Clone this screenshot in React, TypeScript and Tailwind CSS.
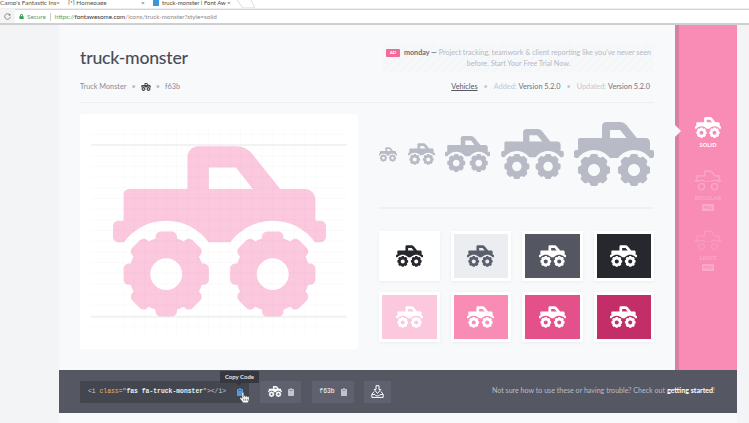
import { FaTruckMonster, FaClipboard, FaHandPointer, FaLock } from "react-icons/fa";

const swatches = [
  { bg: "bg-white", fg: "text-[#27282e]" },
  { bg: "bg-[#ecedf1]", fg: "text-[#5b5e6b]" },
  { bg: "bg-[#545762]", fg: "text-white" },
  { bg: "bg-[#27282e]", fg: "text-white" },
  { bg: "bg-[#fbc8de]", fg: "text-white" },
  { bg: "bg-[#f88cb5]", fg: "text-white" },
  { bg: "bg-[#e3508a]", fg: "text-white" },
  { bg: "bg-[#c42e68]", fg: "text-white" },
];

function GridLines() {
  const rows = Array.from({ length: 19 }, (_, i) => 20.33 + i * 10.67);
  const cols = Array.from({ length: 19 }, (_, i) => 43.33 + i * 10.67);
  return (
    <svg className="absolute inset-0" width="278" height="235" viewBox="0 0 278 235">
      {rows.map((y) => (
        <line key={y} x1="11" x2="267" y1={y} y2={y} stroke="#9aa0b0" strokeOpacity="0.05" />
      ))}
      {cols.map((x) => (
        <line key={x} x1={x} x2={x} y1="11" y2="224" stroke="#9aa0b0" strokeOpacity="0.04" />
      ))}
      <line x1="11" x2="267" y1="31" y2="31" stroke="#e6e7ea" />
      <line x1="11" x2="267" y1="203" y2="203" stroke="#e6e7ea" />
    </svg>
  );
}

// outline version of the truck, the icon packages only have the solid one
function OutlineTruck({ weight, className }: { weight: number; className: string }) {
  return (
    <svg className={className} width="26" height="21" viewBox="0 0 640 512" fill="none" stroke="#fba9c8" strokeWidth={weight}>
      <path d="M16 272 H48 V144 H240 V24 H370 Q400 24 420 50 L490 144 H592 V272 H624" />
      <path d="M48 272 H16 V240 M592 272 H624 V240" />
      <path d="M290 280 H340" />
      <circle cx="160" cy="408" r="76" />
      <circle cx="480" cy="408" r="76" />
      <path d="M60 280 Q160 230 260 280 M380 280 Q480 230 580 280" />
    </svg>
  );
}

function BrowserBar() {
  return (
    <div className="shrink-0 bg-white">
      <div className="flex h-[9px] items-start overflow-hidden border-b border-[#eeeeee] text-[6.4px] leading-[5px] text-[#555555]">
        <span className="w-[56px] overflow-hidden whitespace-nowrap pr-[5px]">Camp's Fantastic Ins</span>
        <span className="w-[12px]">×</span>
        <span className="w-[73px] overflow-hidden whitespace-nowrap">[*] Homepage</span>
        <span className="w-[12px]">×</span>
        <span className="mr-[3px] h-[6px] w-[6px] bg-[#3a96dd]" />
        <span className="w-[65px] overflow-hidden whitespace-nowrap text-[6px] text-[#444444]">truck-monster | Font Aw</span>
        <span>×</span>
        <svg className="ml-[6px]" width="18" height="9" viewBox="0 0 18 9">
          <path d="M0 0 L6 8 H18 L14 0" fill="none" stroke="#cccccc" strokeWidth="0.7" />
        </svg>
      </div>
      <div className="flex h-[16px] items-center border-b-2 border-[#cfcfcf] bg-[#f4f4f4]">
        <svg className="ml-[4px] mr-[4px]" width="7" height="7" viewBox="0 0 10 10">
          <path d="M8.5 3 A4 4 0 1 0 9 5.5" fill="none" stroke="#666666" strokeWidth="1" />
          <path d="M9 0.8 V3.6 H6.2" fill="#666666" />
        </svg>
        <div className="flex h-full flex-1 items-center border-t border-[#d4d4d4] bg-white pl-[4px] text-[6.3px] text-[#8a8a8a]">
          <FaLock className="mr-[3px] h-[5px] w-[5px] text-[#2f9e4f]" />
          <span className="text-[#5c9e70]">Secure</span>
          <span className="mx-[4px] h-[8px] w-px bg-[#cccccc]" />
          <span className="whitespace-nowrap">
            <span className="text-[#5c9e70]">https://</span>
            <span className="text-[#333333]">fontawesome.com</span>
            /icons/truck-monster?style=solid
          </span>
        </div>
      </div>
    </div>
  );
}

function Header() {
  return (
    <>
      <div className="flex items-center justify-between pt-[19px]">
        <h1 className="text-[17.7px] font-medium leading-[28px] tracking-[-0.25px] text-[#4a4c57]">truck-monster</h1>
        <div className="h-[28px] w-[271px] bg-[repeating-linear-gradient(135deg,#f5f6f8_0,#f5f6f8_3px,#f7f8fa_3px,#f7f8fa_6px)] pt-[4px] text-center text-[7.2px] leading-[10.5px] text-[#b5b8c3]">
          <span className="mr-[4px] inline-block h-[8px] w-[14px] rounded-[1px] bg-[#f06a9b] text-center align-middle text-[4.5px] font-bold leading-[8px] text-white">AD</span>
          <span className="font-bold text-[#6a6d79]">monday —</span> Project tracking, teamwork &amp; client reporting like you've never seen before. Start Your Free Trial Now.
        </div>
      </div>
      <div className="mt-[9px] flex h-[12px] items-center justify-between pr-[4px] text-[7.3px] text-[#8a8c97]">
        <div className="flex items-center">
          <span>Truck Monster</span>
          <span className="mx-[5px] text-[#b5b8c2]">•</span>
          <FaTruckMonster className="h-[10px] w-[10px] text-[#44464f]" />
          <span className="mx-[5px] text-[#b5b8c2]">•</span>
          <span>f63b</span>
        </div>
        <div className="flex items-center">
          <span className="text-[#555863] underline">Vehicles</span>
          <span className="mx-[6px] text-[#c5c7cf]">•</span>
          <span className="text-[#c5c7cf]">Added:&nbsp;</span>
          <span className="text-[#6f727e]">Version 5.2.0</span>
          <span className="mx-[6px] text-[#c5c7cf]">•</span>
          <span className="text-[#c5c7cf]">Updated:&nbsp;</span>
          <span className="text-[#6f727e]">Version 5.2.0</span>
        </div>
      </div>
      <div className="mt-[9px] h-px bg-[#eceef1]" />
    </>
  );
}

function Showcase() {
  return (
    <div className="mt-[11px] flex gap-[21px]">
      <div className="relative flex h-[235px] w-[278px] shrink-0 items-center justify-center rounded-[2px] bg-white">
        <FaTruckMonster className="h-[171px] w-[213px] text-[#fbc8de]" />
        <GridLines />
      </div>
      <div className="flex-1">
        <div className="mt-[8px] flex h-[64px] items-center justify-between text-[#b8bac5]">
          <FaTruckMonster className="h-[15px] w-[18px]" />
          <FaTruckMonster className="h-[22px] w-[27px]" />
          <FaTruckMonster className="h-[36px] w-[45px]" />
          <FaTruckMonster className="h-[50px] w-[63px]" />
          <FaTruckMonster className="h-[64px] w-[80px]" />
        </div>
        <div className="mt-[21px] h-[2px] bg-[#f0f1f4]" />
        <div className="mt-[22px] grid grid-cols-4 gap-x-[11px] gap-y-[11px]">
          {swatches.map((s) => (
            <div key={s.bg} className="h-[50px] bg-white p-[3px] shadow-[0_1px_3px_rgba(80,84,100,0.08)]">
              <div className={`flex h-full items-center justify-center ${s.bg} ${s.fg}`}>
                <FaTruckMonster className="h-[22px] w-[27px]" />
              </div>
            </div>
          ))}
        </div>
      </div>
    </div>
  );
}

function StyleRail() {
  return (
    <div className="relative flex w-[62px] shrink-0 flex-col items-center border-l-4 border-[#d97fa5] bg-[#f88cb5] pt-[92px] text-[5.5px] font-bold tracking-[0.2px]">
      <div className="absolute left-[-4px] top-[100px] h-0 w-0 border-y-[6px] border-l-[6px] border-y-transparent border-l-[#f8f9fb]" />
      <FaTruckMonster className="h-[21px] w-[26px] text-white" />
      <span className="mt-[3px] leading-[8px] text-white">SOLID</span>
      <OutlineTruck className="mt-[21px]" weight={30} />
      <span className="mt-[3px] leading-[8px] text-[#fba9c8]">REGULAR</span>
      <span className="mt-[2px] h-[7px] w-[12px] bg-[#fba9c8] text-center text-[4px] leading-[7px] text-[#f88cb5]">PRO</span>
      <OutlineTruck className="mt-[19px]" weight={18} />
      <span className="mt-[3px] leading-[8px] text-[#fba9c8]">LIGHT</span>
      <span className="mt-[2px] h-[7px] w-[12px] bg-[#fba9c8] text-center text-[4px] leading-[7px] text-[#f88cb5]">PRO</span>
    </div>
  );
}

function CodeBar() {
  return (
    <div className="flex h-[43px] shrink-0 items-center bg-[#555863] pl-[21px] pr-[22px]">
      <div className="relative flex h-[22px] w-[169px] items-center justify-between rounded-[1px] bg-[#44464f] pl-[8px] pr-[6px] text-[6.4px] [font-family:'Liberation_Mono',monospace]">
        <span className="whitespace-nowrap text-[#c9cbd3]">
          &lt;i <span className="text-[#e5b567]">class</span>="<span className="font-bold text-[#eeeeee]">fas fa-truck-monster</span>"&gt;&lt;/i&gt;
        </span>
        <FaClipboard className="h-[8px] w-[6px] text-[#4a9ce8]" />
        <div className="absolute left-[140px] top-[-10px] flex h-[12px] w-[39px] items-center justify-center rounded-[1px] bg-[#36373f] text-[6px] font-bold text-[#e8e8ea] [font-family:Lato,sans-serif]">
          Copy Code
        </div>
        <div className="absolute left-[156px] top-[2px] h-0 w-0 border-x-[3px] border-t-[3px] border-x-transparent border-t-[#36373f]" />
        <FaHandPointer className="absolute left-[160px] top-[11px] h-[11px] w-[9px] stroke-[#333333] stroke-[14] text-white" />
      </div>
      <div className="ml-[11px] flex h-[22px] w-[41px] items-center justify-center gap-[6px] rounded-[1px] bg-[#5f626e] text-white">
        <FaTruckMonster className="h-[11px] w-[14px]" />
        <FaClipboard className="h-[8px] w-[6px] text-[#c3c5cd]" />
      </div>
      <div className="ml-[11px] flex h-[22px] w-[42px] items-center justify-center gap-[6px] rounded-[1px] bg-[#5f626e] text-[6.4px] text-white [font-family:'Liberation_Mono',monospace]">
        <span>f63b</span>
        <FaClipboard className="h-[8px] w-[6px] text-[#c3c5cd]" />
      </div>
      <div className="ml-[10px] flex h-[22px] w-[27px] items-center justify-center rounded-[1px] bg-[#5f626e]">
        <svg width="13" height="13" viewBox="0 0 13 13" fill="none" stroke="white">
          <path d="M3 6.5 L0.8 9.5 V12.4 H12.2 V9.5 L10 6.5" strokeWidth="1" />
          <path d="M0.8 9.5 H4 L5 10.8 H8 L9 9.5 H12.2" strokeWidth="0.9" />
          <path d="M5 0.7 H8 V4.5 H9.8 L6.5 8.5 L3.2 4.5 H5 Z" strokeWidth="1" />
        </svg>
      </div>
      <p className="ml-auto whitespace-nowrap text-[7.1px] text-[#b9bcc6]">
        Not sure how to use these or having trouble? Check out <span className="font-bold text-white">getting started</span>!
      </p>
    </div>
  );
}

export default function App() {
  return (
    <div className="flex h-[423px] w-[749px] flex-col overflow-hidden bg-[#f3f4f6] [font-family:Lato,sans-serif]">
      <BrowserBar />
      <div className="flex min-h-0 flex-1">
        <div className="w-[59px] shrink-0" />
        <div className="flex w-[678px] shrink-0 flex-col bg-[#f8f9fb]">
          <div className="flex min-h-0 flex-1">
            <div className="w-[616px] shrink-0 px-[21px]">
              <Header />
              <Showcase />
            </div>
            <StyleRail />
          </div>
          <CodeBar />
          <div className="h-[10px] shrink-0" />
        </div>
      </div>
    </div>
  );
}
